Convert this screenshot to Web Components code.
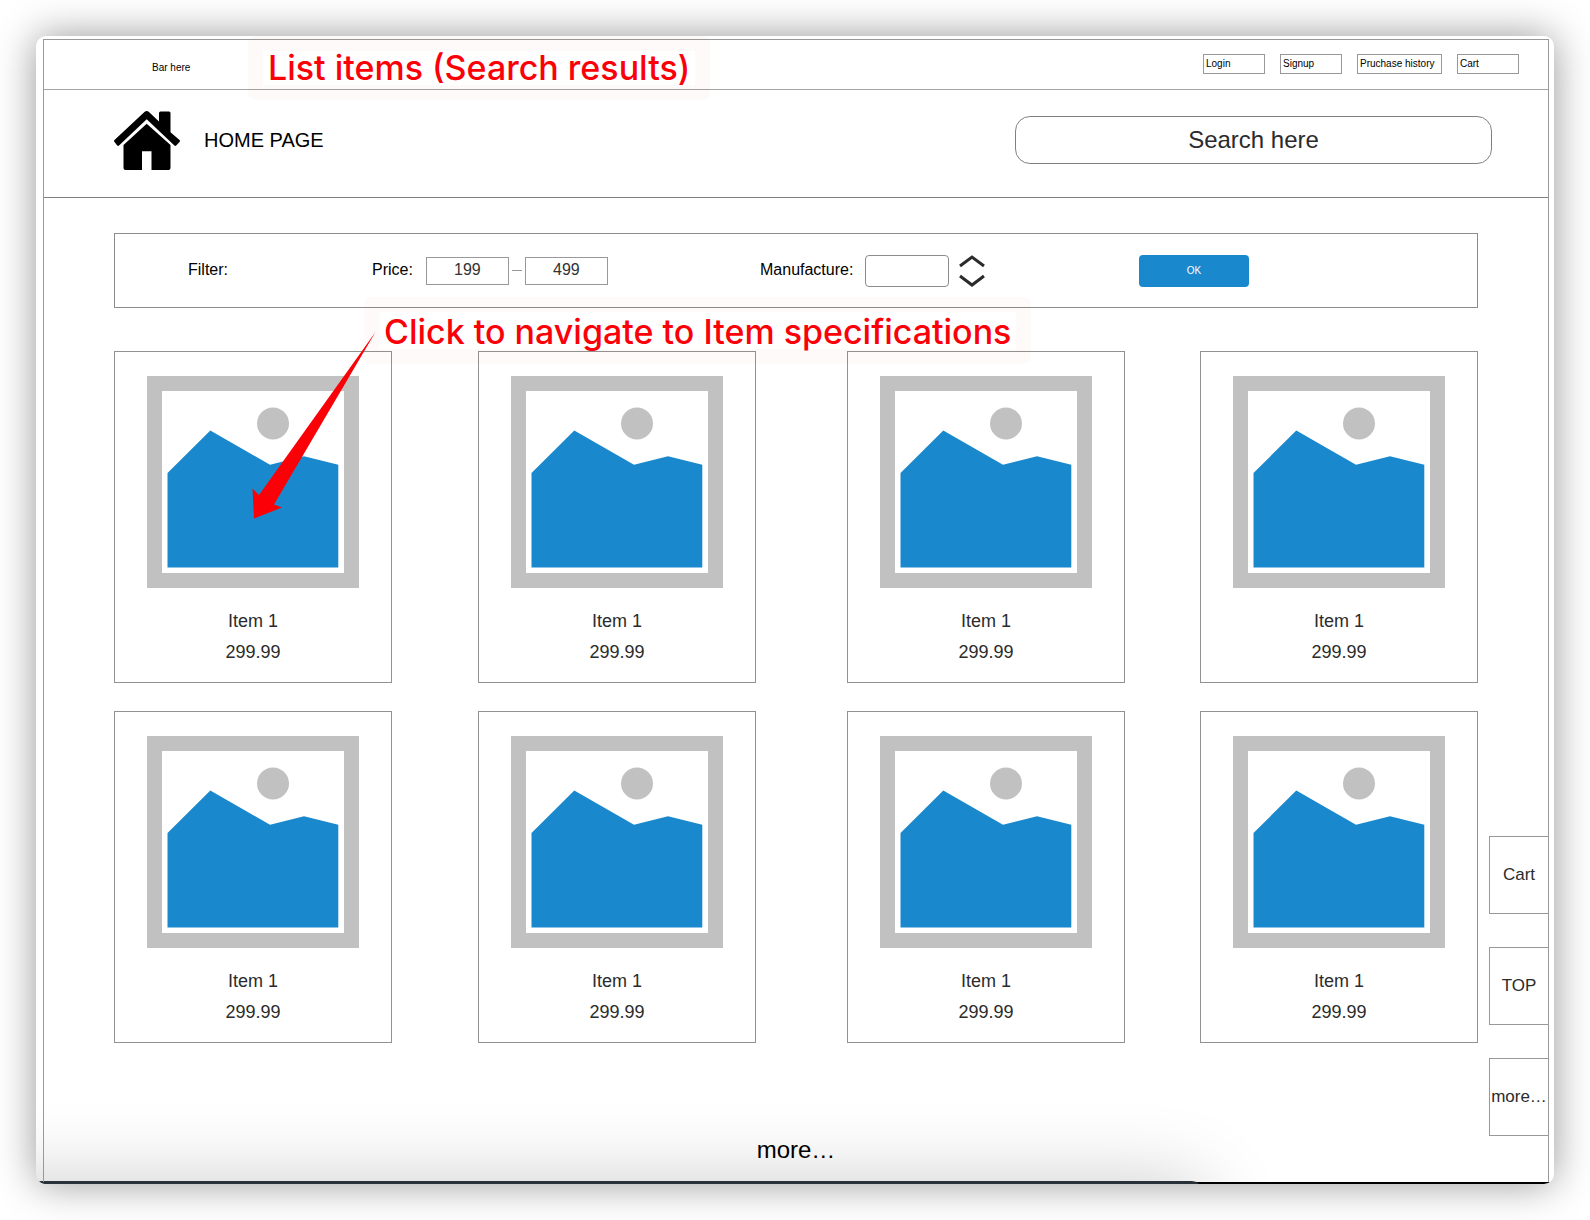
<!DOCTYPE html>
<html lang="en">
<head>
<meta charset="utf-8">
<title>List items</title>
<style>
  body { margin: 0; padding: 36px; background: #fff; color: #000; font-family: "Liberation Sans", Arial, sans-serif; }
</style>
</head>
<body>
<app-window>
  <top-bar></top-bar>
  <site-header></site-header>
  <results-page>
    <filter-bar></filter-bar>
    <product-grid></product-grid>
    <side-menu slot="side"></side-menu>
  </results-page>
  <note-label slot="notes" class="title">List items (Search results)</note-label>
  <note-label slot="notes" class="hint">Click to navigate to Item specifications</note-label>
  <note-arrow slot="notes"></note-arrow>
</app-window>

<script>
const define = (name, html) => customElements.define(name, class extends HTMLElement {
  constructor() {
    super();
    const t = document.createElement('template');
    t.innerHTML = html;
    this.attachShadow({ mode: 'open' }).append(t.content.cloneNode(true));
  }
});
const base = `*{box-sizing:border-box} button,input,select{font:inherit;color:inherit;margin:0;border-radius:0;outline:0}`;

define('app-window', `
<style>${base}
  :host{display:block;position:relative;overflow:hidden;border-radius:10px;
    background:linear-gradient(#000,#000) bottom/100% 2px no-repeat #fff;
    padding:3px 5px 2px 7px;box-shadow:0 0 40px rgba(0,0,0,.41)}
  .frame{position:relative;border:1px solid #999;border-bottom:0}
  .under{position:absolute;left:-100px;right:352px;top:calc(100% - 3px);height:160px;border-radius:10px;
    background:#28303a;box-shadow:0 0 80px rgba(0,0,0,.2)}
  ::slotted(note-label),::slotted(note-arrow){position:absolute}
  ::slotted(.title){left:212px;top:0}
  ::slotted(.hint){left:328px;top:261px;padding-top:3px}
  ::slotted(note-arrow){left:216px;top:295px}
</style>
<div class="under"></div>
<div class="frame"><slot></slot></div>
<slot name="notes"></slot>`);

define('top-bar', `
<style>${base}
  :host{display:flex;align-items:center;justify-content:space-between;height:50px;box-sizing:border-box;
    padding:0 29px 0 108px;border-bottom:1px solid #a4a4a4;font-size:10px;line-height:12px}
  nav{display:flex;gap:15px;padding-bottom:2px}
  button{width:62px;height:20px;padding:0 2px;border:1px solid #999;background:#fff;text-align:left;white-space:nowrap}
  .wide{width:85px}
  span{padding-top:6px}
</style>
<span>Bar here</span>
<nav><button>Login</button><button>Signup</button><button class="wide">Pruchase history</button><button>Cart</button></nav>`);

define('site-header', `
<style>${base}
  :host{display:flex;align-items:center;justify-content:space-between;height:108px;box-sizing:border-box;
    padding:0 56px 7px 70px;border-bottom:1px solid #808080}
  a{display:flex;align-items:center;gap:24px;color:inherit;text-decoration:none;font-size:20px;line-height:24px}
  svg{display:block}
  input{width:477px;height:48px;padding:0;border:1px solid #808080;border-radius:15px;background:#fff;text-align:center;font-size:24px;color:#2b2b2b}
  input::placeholder{color:#2b2b2b;opacity:1}
</style>
<a href="#"><svg width="66" height="59" viewBox="0 0 66 59" aria-hidden="true">
  <path d="M30.7.8q2-1.6 4 0L45 10.6V2q0-1.5 1.5-1.5h8.5q1.500 0 1.500 1.500v19.300l9 7.600q.9.9.2 1.800l-3.500 3.800q-.9.8-1.800 0L32.700 8.300 5 34.500q-.9.8-1.800 0L.3 30.700q-.7-.9.200-1.800z"/>
  <path d="M32.700 12.700 56.500 34v23q0 2-2 2h-17V40.300H28V59H11.500q-2 0-2-2V34z"/>
</svg>HOME PAGE</a>
<input type="text" aria-label="Search" placeholder="Search here">`);

define('results-page', `
<style>
  :host{display:flex;gap:11px;padding:35px 0 0 70px}
  main{flex:1;min-width:0}
  .more{display:block;width:max-content;margin:92px auto 0;padding-bottom:18px;font-size:24px;line-height:29px;color:#000;text-decoration:none}
  ::slotted(side-menu){align-self:flex-end;margin-bottom:46px}
</style>
<main><slot></slot><a class="more" href="#">more…</a></main>
<slot name="side"></slot>`);

define('filter-bar', `
<style>${base}
  :host{display:grid;grid-template-columns:184fr 388fr 379fr 338fr;align-items:center;height:75px;
    box-sizing:border-box;padding-left:73px;border:1px solid #8c8c8c;font-size:16px;line-height:18px}
  div{display:flex;align-items:center}
  input{width:83px;height:28px;padding:0 0 2px;border:1px solid #999;background:#fff;text-align:center;color:#333}
  i{width:10px;height:1px;margin:0 3px;background:#999}
  .lab{padding-bottom:2px}
  .price{margin-right:13px}
  .manu{margin-right:12px}
  select{width:84px;height:32px;margin-right:10px;border:1px solid #8c8c8c;border-radius:4px;background:#fff;appearance:none}
  svg{display:block;fill:none;stroke:#2b2b2b;stroke-width:3}
  button{width:110px;height:32px;border:0;border-radius:4px;background:#1a88cd;color:#fff;font-size:10px}
</style>
<span class="lab">Filter:</span>
<div><label class="lab price" for="lo">Price:</label><input id="lo" value="199"><i></i><input aria-label="Highest price" value="499"></div>
<div><label class="lab manu" for="m">Manufacture:</label><select id="m"><option></option></select>
<svg width="26" height="32" viewBox="0 0 26 32" aria-hidden="true"><path d="M1 11 13 2 25 11M1 21 13 30 25 21"/></svg></div>
<div><button>OK</button></div>`);

define('product-grid', `
<style>
  :host{display:grid;grid-template-columns:364fr 369fr 353fr 278px;row-gap:28px;margin-top:43px}
</style>
${'<product-card><span slot="name">Item 1</span><span slot="price">299.99</span></product-card>'.repeat(8)}`);

define('product-card', `
<style>
  :host{display:flex;flex-direction:column;align-items:center;box-sizing:border-box;width:278px;height:332px;
    padding-top:24px;border:1px solid #929292;background:#fff;font-size:18px;line-height:31px;color:#2b2b2b}
  svg{display:block;margin-bottom:18px}
</style>
<svg width="212" height="212" viewBox="0 0 212 212" role="img" aria-label="Product picture">
  <path fill="#c1c1c1" fill-rule="evenodd" d="M0 0h212v212H0zM15 15v182h182V15z"/>
  <circle cx="126" cy="47.500" r="16" fill="#c1c1c1"/>
  <path fill="#1a88cd" d="M20.500 97 63.300 54.500 123 88.700l34-8.500 34.300 8.500v102.800H20.500z"/>
</svg>
<slot name="name"></slot><slot name="price"></slot>`);

define('side-menu', `
<style>${base}
  :host{display:flex;flex-direction:column;gap:33px;width:59px}
  button{height:78px;padding:0;border:1px solid #999;border-right:0;background:#fff;font-size:17px;color:#2b2b2b}
</style>
<button>Cart</button><button>TOP</button><button>more…</button>`);

define('note-label', `
<style>
  :host{display:block;padding:0 5px;border:15px solid rgba(255,0,0,.018);border-radius:6px;color:#fb0007;
    font:500 34px/34px Inter,sans-serif;white-space:nowrap}
</style>
<slot></slot>`);

define('note-arrow', `
<style>:host{display:block} svg{display:block}</style>
<svg width="125" height="190" viewBox="0 0 125 190" aria-hidden="true">
  <path fill="#fb0007" d="M123.500 1 7 164 .5 157.500 2 187.500l28-11-8-3z"/>
</svg>`);
</script>
</body>
</html>
